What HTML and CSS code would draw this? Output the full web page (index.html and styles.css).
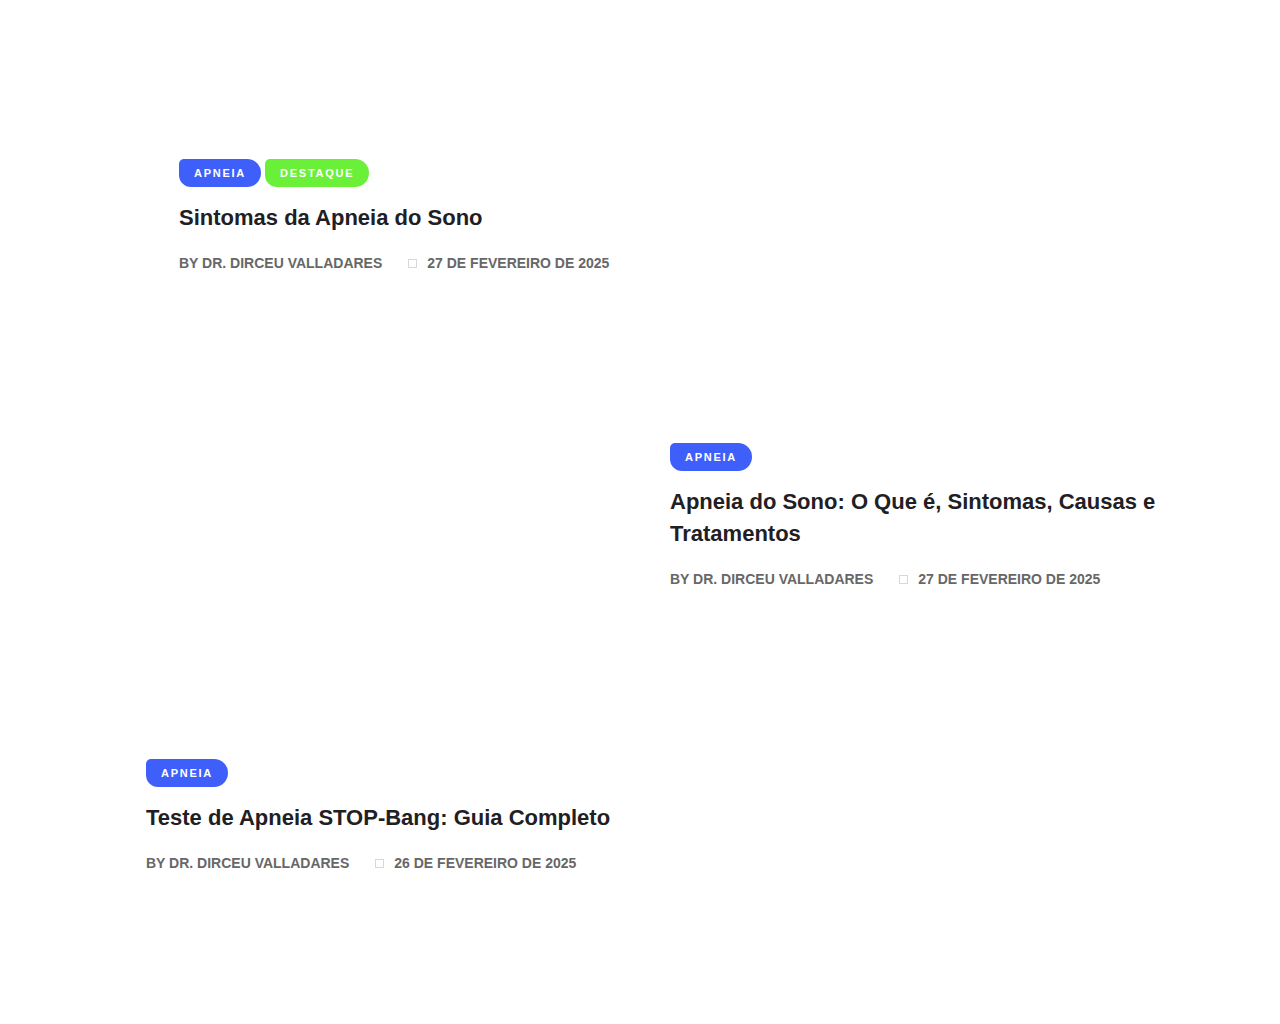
FILE: index.html
```html
<!DOCTYPE html>
<html lang="pt-BR">
<head>
<meta charset="utf-8">
<title>Apneia</title>
<link rel="stylesheet" href="styles.css">
</head>
<body>
<main class="posts">
  <article class="post post--featured">
    <div class="tags">
      <a class="tag tag--blue" href="#">Apneia</a>
      <a class="tag tag--green" href="#">Destaque</a>
    </div>
    <h2 class="title">Sintomas da Apneia do Sono</h2>
    <div class="meta">
      <span class="author">By Dr. Dirceu Valladares</span>
      <span class="date"><span class="ico"></span>27 de fevereiro de 2025</span>
    </div>
  </article>
  <article class="post post--right">
    <div class="tags">
      <a class="tag tag--blue" href="#">Apneia</a>
    </div>
    <h2 class="title">Apneia do Sono: O Que é, Sintomas, Causas e Tratamentos</h2>
    <div class="meta">
      <span class="author">By Dr. Dirceu Valladares</span>
      <span class="date"><span class="ico"></span>27 de fevereiro de 2025</span>
    </div>
  </article>
  <article class="post post--left">
    <div class="tags">
      <a class="tag tag--blue" href="#">Apneia</a>
    </div>
    <h2 class="title">Teste de Apneia STOP-Bang: Guia Completo</h2>
    <div class="meta">
      <span class="author">By Dr. Dirceu Valladares</span>
      <span class="date"><span class="ico"></span>26 de fevereiro de 2025</span>
    </div>
  </article>
</main>
</body>
</html>
```
FILE: styles.css
```css
* { box-sizing: border-box; }
html, body { margin: 0; padding: 0; background: #fff; }
body { font-family: "Liberation Sans", Arial, sans-serif; color: #1f2024; }

.posts {
  display: flex;
  flex-direction: column;
  gap: 170px;
  padding-top: 159px;
  margin-left: 146px;
  width: 1034px;
}

.post { width: 510px; }
.post--featured { margin-left: 33px; }
.post--right { margin-left: 524px; }

.tags { display: flex; gap: 4px; }
.tag {
  display: inline-flex;
  align-items: center;
  height: 28px;
  padding: 0 15px;
  border-radius: 5px 14px 14px 12px;
  font-size: 11px;
  font-weight: 700;
  letter-spacing: 1.75px;
  text-transform: uppercase;
  color: #fff;
  text-decoration: none;
}
.tag--blue { background: #3f5ffb; }
.tag--green { background: #6bf03a; }

.title {
  margin: 15px 0 0;
  font-size: 22px;
  line-height: 32px;
  font-weight: 700;
  color: #1f2024;
}

.meta {
  display: flex;
  align-items: center;
  gap: 26px;
  margin-top: 19px;
  font-size: 14px;
  line-height: 20px;
  font-weight: 700;
  text-transform: uppercase;
  color: #676767;
}
.date { display: inline-flex; align-items: center; }
.ico {
  width: 9px;
  height: 9px;
  border: 1px solid #d8d8d8;
  margin-right: 10px;
}
```
